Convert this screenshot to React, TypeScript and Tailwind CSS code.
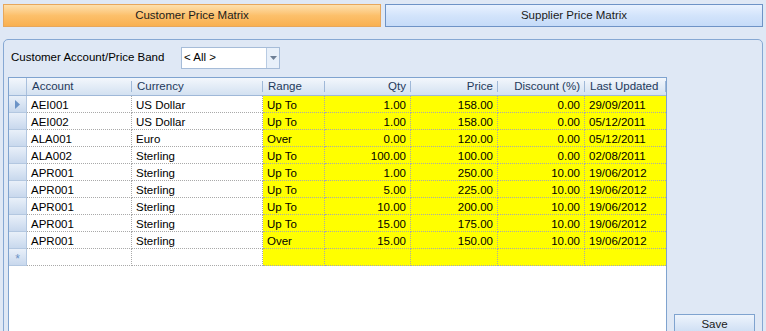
import React from 'react'

type Row = {
  account: string
  currency: string
  range: string
  qty: string
  price: string
  discount: string
  updated: string
}

const rows: Row[] = [
  { account: 'AEI001', currency: 'US Dollar', range: 'Up To', qty: '1.00', price: '158.00', discount: '0.00', updated: '29/09/2011' },
  { account: 'AEI002', currency: 'US Dollar', range: 'Up To', qty: '1.00', price: '158.00', discount: '0.00', updated: '05/12/2011' },
  { account: 'ALA001', currency: 'Euro', range: 'Over', qty: '0.00', price: '120.00', discount: '0.00', updated: '05/12/2011' },
  { account: 'ALA002', currency: 'Sterling', range: 'Up To', qty: '100.00', price: '100.00', discount: '0.00', updated: '02/08/2011' },
  { account: 'APR001', currency: 'Sterling', range: 'Up To', qty: '1.00', price: '250.00', discount: '10.00', updated: '19/06/2012' },
  { account: 'APR001', currency: 'Sterling', range: 'Up To', qty: '5.00', price: '225.00', discount: '10.00', updated: '19/06/2012' },
  { account: 'APR001', currency: 'Sterling', range: 'Up To', qty: '10.00', price: '200.00', discount: '10.00', updated: '19/06/2012' },
  { account: 'APR001', currency: 'Sterling', range: 'Up To', qty: '15.00', price: '175.00', discount: '10.00', updated: '19/06/2012' },
  { account: 'APR001', currency: 'Sterling', range: 'Over', qty: '15.00', price: '150.00', discount: '10.00', updated: '19/06/2012' },
]

const cell = 'h-[17px] leading-[18px] border-r border-b border-dotted border-[#a9a9a9] px-[4px] whitespace-nowrap overflow-hidden'
const yellow = 'bg-[#ffff00]'

const HeaderCell = ({ children, w, right }: { children?: React.ReactNode; w: string; right?: boolean }) => (
  <div className={`${w} relative h-full flex items-center px-[5px] whitespace-nowrap ${right ? 'justify-end' : ''}`}>
    <span className="text-[#1e395b]">{children}</span>
    <span className="absolute right-0 top-[3px] bottom-[3px] w-px bg-[#9fb8d8]" />
  </div>
)

export default function App() {
  return (
    <div
      className="w-[766px] h-[331px] overflow-hidden bg-[#dfe8f5] text-[11.5px] text-black"
      style={{ fontFamily: '"Liberation Sans", Arial, sans-serif' }}
    >
      {/* Tabs */}
      <div className="flex gap-[4px] pt-[4px] px-[3px]">
        <div className="w-[378px] h-[23px] flex items-center justify-center border border-[#e7a75c] bg-gradient-to-b from-[#fde0ad] via-[#fcc06b] to-[#f9b050] text-[#1b1b1b]">
          Customer Price Matrix
        </div>
        <div className="flex-1 h-[23px] flex items-center justify-center border border-[#6e93c6] bg-gradient-to-b from-[#e9f2ff] via-[#d3e4fb] to-[#c5dbf8] text-[#1b1b1b]">
          Supplier Price Matrix
        </div>
      </div>

      {/* Group box */}
      <div className="mt-[12px] ml-[3px] mr-[3px] h-[400px] border border-[#86a8d3] rounded-t-[5px] pt-[6px] pl-[4px]">
        <div className="flex items-center h-[23px]">
          <span className="ml-[3px] w-[167px]">Customer Account/Price Band</span>
          <div className="ml-[3px] w-[99px] h-[22px] flex border border-[#a6bcd8] bg-white">
            <span className="flex-1 pl-[2px] leading-[18px]">&lt; All &gt;</span>
            <div className="w-[13px] h-full border-l border-[#b8cbe3] bg-[#e8f0fa] flex items-center justify-center">
              <svg width="7" height="4" viewBox="0 0 7 4">
                <path d="M0 0 H7 L3.5 4 Z" fill="#6d7f96" />
              </svg>
            </div>
          </div>
        </div>

        <div className="flex mt-[8px]">
          {/* Grid */}
          <div className="w-[659px] h-[300px] border border-[#7fa3cf] bg-white">
            <div className="flex h-[18px] border-b border-[#9fb8d8] bg-gradient-to-b from-[#f3f7fc] to-[#d3e1f1]">
              <div className="w-[18px] h-full border-r border-[#a9c0dd]" />
              <HeaderCell w="w-[105px]">Account</HeaderCell>
              <HeaderCell w="w-[131px]">Currency</HeaderCell>
              <HeaderCell w="w-[62px]">Range</HeaderCell>
              <HeaderCell w="w-[86px]" right>Qty</HeaderCell>
              <HeaderCell w="w-[87px]" right>Price</HeaderCell>
              <HeaderCell w="w-[87px]" right>Discount (%)</HeaderCell>
              <HeaderCell w="w-[81px]">Last Updated</HeaderCell>
            </div>

            {rows.map((r, i) => (
              <div key={i} className="flex">
                <div className="w-[18px] h-[17px] border-r border-b border-[#b3c7e0] bg-gradient-to-b from-[#e9f0f9] to-[#c8d8ed] flex items-center justify-center">
                  {i === 0 && (
                    <svg width="5" height="9" viewBox="0 0 5 9">
                      <path d="M0 0 L5 4.5 L0 9 Z" fill="#6b93c6" />
                    </svg>
                  )}
                </div>
                <div className={`${cell} w-[105px]`}>{r.account}</div>
                <div className={`${cell} w-[131px]`}>{r.currency}</div>
                <div className={`${cell} ${yellow} w-[62px]`}>{r.range}</div>
                <div className={`${cell} ${yellow} w-[86px] text-right`}>{r.qty}</div>
                <div className={`${cell} ${yellow} w-[87px] text-right`}>{r.price}</div>
                <div className={`${cell} ${yellow} w-[87px] text-right`}>{r.discount}</div>
                <div className={`${cell} ${yellow} w-[81px] border-r-0`}>{r.updated}</div>
              </div>
            ))}

            {/* New row */}
            <div className="flex">
              <div className="w-[18px] h-[17px] border-r border-b border-[#b3c7e0] bg-gradient-to-b from-[#e9f0f9] to-[#c8d8ed] flex items-center justify-center text-[12px] text-[#6b93c6] leading-none pt-[3px]">
                *
              </div>
              <div className={`${cell} w-[105px]`} />
              <div className={`${cell} w-[131px]`} />
              <div className={`${cell} ${yellow} w-[62px]`} />
              <div className={`${cell} ${yellow} w-[86px]`} />
              <div className={`${cell} ${yellow} w-[87px]`} />
              <div className={`${cell} ${yellow} w-[87px]`} />
              <div className={`${cell} ${yellow} w-[81px] border-r-0`} />
            </div>
          </div>

          {/* Save */}
          <div className="ml-[7px] pt-[237px]">
            <div className="w-[81px] h-[22px] border border-[#7fa3cf] bg-gradient-to-b from-[#eef4fc] to-[#c9dbf2] flex items-center justify-center text-[#1b1b1b]">
              Save
            </div>
          </div>
        </div>
      </div>
    </div>
  )
}
